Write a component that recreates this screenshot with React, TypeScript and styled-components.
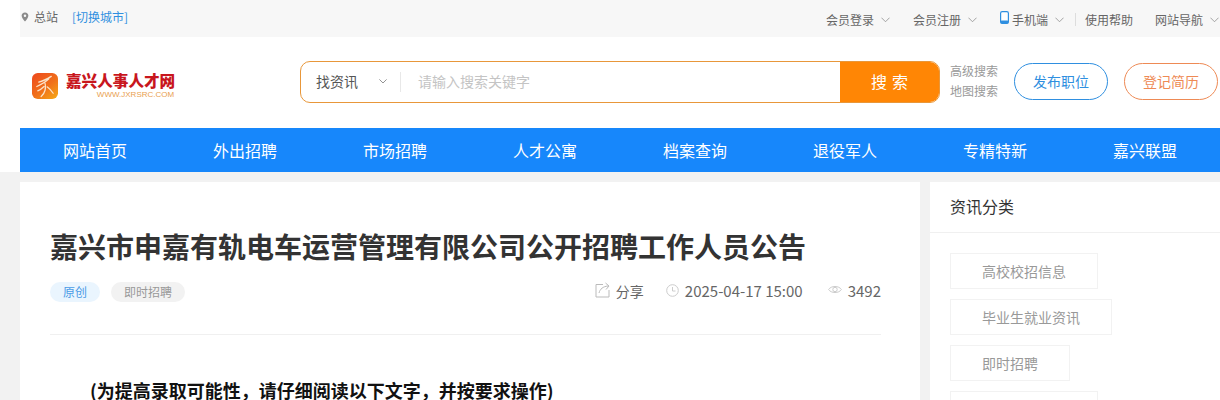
import { FunctionComponent } from "react";
import styled, { createGlobalStyle } from "styled-components";

const GlobalStyle = createGlobalStyle`
  html, body {
    margin: 0;
    padding: 0;
    height: 400px;
    overflow: hidden;
    background: #fff;
    font-family: "Noto Sans CJK SC", "Noto Sans", sans-serif;
  }
`;

const Page = styled.div`
  width: 1220px;
  height: 400px;
  overflow: hidden;
`;

const Header = styled.header`
  margin-left: 20px;
  width: 1200px;
`;

const TopBar = styled.div`
  height: 37px;
  background: #f7f7f7;
  display: flex;
  align-items: center;
  justify-content: space-between;
  font-size: 12px;
  color: #666;
`;

const City = styled.div`
  display: flex;
  align-items: center;
  padding-bottom: 4px;
`;

const CityLink = styled.span`
  color: #2f8fe0;
  margin-left: 14px;
`;

const TopMenu = styled.div`
  display: flex;
  align-items: center;
  padding-top: 1px;
`;

const TopItem = styled.span<{ $gap: number }>`
  display: flex;
  align-items: center;
  margin-right: ${(p) => p.$gap}px;
  white-space: nowrap;

  svg {
    margin-left: 7px;
  }
`;

const TopDivider = styled.span`
  width: 1px;
  height: 13px;
  background: #ddd;
  margin-right: 9px;
`;

const LogoRow = styled.div`
  height: 91px;
  display: flex;
  align-items: center;
`;

const Logo = styled.div`
  width: 280px;
  display: flex;
  align-items: center;
  padding: 6px 0 0 12px;
  box-sizing: border-box;
`;

const LogoText = styled.div`
  margin-left: 8px;
  display: flex;
  flex-direction: column;
  align-items: flex-end;
`;

const LogoName = styled.span`
  color: #c8161d;
  font-size: 15.6px;
  font-weight: 900;
  line-height: 19px;
  white-space: nowrap;
`;

const LogoUrl = styled.span`
  color: #e9a04e;
  font-size: 8px;
  line-height: 10px;
  margin-right: 1px;
  font-family: "Liberation Sans", sans-serif;
`;

const SearchBox = styled.div`
  width: 640px;
  height: 42px;
  margin-top: -1px;
  box-sizing: border-box;
  border: 1px solid #e8973a;
  border-radius: 10px;
  display: flex;
  align-items: stretch;
  overflow: hidden;
`;

const SearchType = styled.div`
  width: 100px;
  display: flex;
  align-items: center;
  justify-content: space-between;
  padding: 0 14px 2px 15px;
  box-sizing: border-box;
  font-size: 14px;
  color: #555;
  position: relative;

  &::after {
    content: "";
    position: absolute;
    right: 0;
    top: 10px;
    height: 20px;
    width: 1px;
    background: #e8e8e8;
  }
`;

const SearchInput = styled.div`
  flex: 1;
  display: flex;
  align-items: center;
  padding: 0 0 2px 17px;
  font-size: 14px;
  color: #c4c4c4;
`;

const SearchButton = styled.div`
  width: 100px;
  margin: -1px -1px -1px 0;
  padding: 0 0 3px 4px;
  box-sizing: border-box;
  background: #ff8605;
  color: #fff;
  font-size: 16px;
  display: flex;
  align-items: center;
  justify-content: center;
  letter-spacing: 5px;
`;

const SearchLinks = styled.div`
  width: 74px;
  padding: 0 0 3px 10px;
  box-sizing: border-box;
  font-size: 12px;
  line-height: 20px;
  color: #999;
`;

const PillButton = styled.div<{ $color: string; $gap: number }>`
  width: 94px;
  height: 37px;
  margin: 0 ${(p) => p.$gap}px 2px 0;
  padding-bottom: 2px;
  box-sizing: border-box;
  border: 1px solid ${(p) => p.$color};
  border-radius: 19px;
  color: ${(p) => p.$color};
  font-size: 14px;
  display: flex;
  align-items: center;
  justify-content: center;
`;

const Nav = styled.nav`
  height: 44px;
  background: #1787fb;
  display: flex;
`;

const NavItem = styled.a`
  width: 150px;
  display: flex;
  align-items: center;
  justify-content: center;
  color: #fff;
  font-size: 16px;
`;

const Main = styled.main`
  height: 228px;
  background: #f2f2f2;
  padding: 10px 0 0 20px;
  box-sizing: border-box;
  display: flex;
  gap: 10px;
`;

const Article = styled.article`
  width: 900px;
  height: 400px;
  background: #fff;
  padding: 45px 39px 0 30px;
  box-sizing: border-box;
`;

const Title = styled.h1`
  margin: 0;
  font-size: 28px;
  font-weight: 700;
  line-height: 38px;
  color: #333;
  white-space: nowrap;
`;

const MetaRow = styled.div`
  margin-top: 17px;
  height: 20px;
  display: flex;
  align-items: center;
  justify-content: space-between;
`;

const Tags = styled.div`
  display: flex;
  gap: 11px;
`;

const Tag = styled.span<{ $blue?: boolean }>`
  height: 20px;
  padding: 0 13px;
  border-radius: 10px;
  font-size: 12px;
  line-height: 20px;
  background: ${(p) => (p.$blue ? "#eaf5fe" : "#f2f2f2")};
  color: ${(p) => (p.$blue ? "#4a9be6" : "#999")};
`;

const Meta = styled.div`
  display: flex;
  align-items: center;
  padding-bottom: 3px;
  font-size: 14px;
  color: #666;
`;

const MetaItem = styled.span<{ $gap: number; $numeric?: boolean }>`
  display: flex;
  align-items: center;
  margin-left: ${(p) => p.$gap}px;
  white-space: nowrap;
  font-size: ${(p) => (p.$numeric ? 15 : 14)}px;

  svg {
    margin-right: 6px;
  }
`;

const Divider = styled.div`
  margin-top: 32px;
  height: 1px;
  background: #f0f0f0;
`;

const Notice = styled.p`
  margin: 42px 0 0 40px;
  font-size: 18px;
  font-weight: 700;
  line-height: 26px;
  color: #111;
  white-space: nowrap;
`;

const Side = styled.aside`
  width: 290px;
  height: 400px;
  background: #fff;
`;

const SideHead = styled.div`
  height: 50px;
  padding: 0 20px 3px;
  box-sizing: border-box;
  margin-bottom: 1px;
  box-shadow: 0 1px 0 #f0f0f0;
  font-size: 16px;
  color: #333;
  display: flex;
  align-items: center;
`;

const CategoryList = styled.div`
  padding: 20px 20px 0;
  display: flex;
  flex-direction: column;
  align-items: flex-start;
  gap: 10px;
`;

const Category = styled.span<{ $minWidth?: number }>`
  height: 36px;
  padding: 0 31px 1px;
  box-sizing: border-box;
  min-width: ${(p) => p.$minWidth ?? 120}px;
  border: 1px solid #f2f2f2;
  font-size: 14px;
  color: #999;
  display: flex;
  align-items: center;
  white-space: nowrap;
`;

const Chevron: FunctionComponent<{ size?: number; color?: string }> = ({ size = 9, color = "#999" }) => (
  <svg width={size} height={size} viewBox="0 0 10 10" fill="none">
    <path d="M0.5 3 L5 7.5 L9.5 3" stroke={color} strokeWidth="1" />
  </svg>
);

const NAV_ITEMS = ["网站首页", "外出招聘", "市场招聘", "人才公寓", "档案查询", "退役军人", "专精特新", "嘉兴联盟"];
const CATEGORIES = ["高校校招信息", "毕业生就业资讯", "即时招聘"];

export default function App() {
  return (
    <Page>
      <GlobalStyle />
      <Header>
        <TopBar>
          <City>
            <svg width="8" height="10" viewBox="0 0 9 11" style={{ marginRight: 5, marginLeft: 1 }}>
              <path
                fillRule="evenodd"
                d="M4.5 0.3C2.2 0.3 0.7 2 0.7 4C0.7 6.4 3.4 9 4.5 10.6C5.6 9 8.3 6.4 8.3 4C8.3 2 6.8 0.3 4.5 0.3ZM4.5 2.7A1.4 1.4 0 1 1 4.5 5.5A1.4 1.4 0 1 1 4.5 2.7Z"
                fill="#8a8a8a"
              />
            </svg>
            总站
            <CityLink>[切换城市]</CityLink>
          </City>
          <TopMenu>
            <TopItem $gap={23}>会员登录<Chevron /></TopItem>
            <TopItem $gap={23}>会员注册<Chevron /></TopItem>
            <TopItem $gap={11}>
              <svg width="9" height="13" viewBox="0 0 9 13" style={{ margin: "0 3px 3px 0" }}>
                <rect x="0.6" y="0.6" width="7.8" height="11.8" rx="1.6" fill="#fff" stroke="#2f8fe0" strokeWidth="1.2" />
                <rect x="0.6" y="9.6" width="7.8" height="2.8" rx="1.2" fill="#2f8fe0" />
              </svg>
              手机端<Chevron />
            </TopItem>
            <TopDivider />
            <TopItem $gap={22}>使用帮助</TopItem>
            <TopItem $gap={1}>网站导航<Chevron /></TopItem>
          </TopMenu>
        </TopBar>
        <LogoRow>
          <Logo>
            <svg width="26" height="26" viewBox="0 0 27 27">
              <defs>
                <linearGradient id="logoFill" x1="0.1" y1="0" x2="0.9" y2="1">
                  <stop offset="0" stopColor="#ee4a1c" />
                  <stop offset="0.55" stopColor="#f0701a" />
                  <stop offset="1" stopColor="#f5a516" />
                </linearGradient>
              </defs>
              <rect width="27" height="27" rx="6" fill="url(#logoFill)" />
              <path
                d="M7 9.5C11 8.5 16 6 20 3.5M17.5 6C14 9.5 9.5 12 5 14M13.5 10.5C15 15 13.5 21 9.5 24.5M12.5 14C10.5 16 8.5 17.5 6 18.5M16 14.5C18 16 20 18 22 21"
                stroke="#fbe3c8"
                strokeWidth="1.3"
                fill="none"
                strokeLinecap="round"
              />
            </svg>
            <LogoText>
              <LogoName>嘉兴人事人才网</LogoName>
              <LogoUrl>WWW.JXRSRC.COM</LogoUrl>
            </LogoText>
          </Logo>
          <SearchBox>
            <SearchType>
              找资讯
              <Chevron size={8} color="#777" />
            </SearchType>
            <SearchInput>请输入搜索关键字</SearchInput>
            <SearchButton>搜索</SearchButton>
          </SearchBox>
          <SearchLinks>
            <div>高级搜索</div>
            <div>地图搜索</div>
          </SearchLinks>
          <PillButton $color="#2f8fe0" $gap={16}>发布职位</PillButton>
          <PillButton $color="#ee8a55" $gap={0}>登记简历</PillButton>
        </LogoRow>
        <Nav>
          {NAV_ITEMS.map((item) => (
            <NavItem key={item}>{item}</NavItem>
          ))}
        </Nav>
      </Header>
      <Main>
        <Article>
          <Title>嘉兴市申嘉有轨电车运营管理有限公司公开招聘工作人员公告</Title>
          <MetaRow>
            <Tags>
              <Tag $blue>原创</Tag>
              <Tag>即时招聘</Tag>
            </Tags>
            <Meta>
              <MetaItem $gap={0}>
                <svg width="15" height="16" viewBox="0 0 15 16" fill="none" stroke="#bbb" strokeWidth="1" style={{ marginRight: 6, marginBottom: 2 }}>
                  <path d="M8 2.5H1V15H14V8" />
                  <path d="M4 11C5 7 8 4.5 13 4M10.5 1L14 4L11 7.5" />
                </svg>
                分享
              </MetaItem>
              <MetaItem $gap={22} $numeric>
                <svg width="13" height="13" viewBox="0 0 13 13" fill="none" stroke="#ccc" strokeWidth="1" style={{ marginBottom: 1 }}>
                  <circle cx="6.5" cy="6.5" r="5.8" />
                  <path d="M6.5 3V7H9.5" />
                </svg>
                2025-04-17 15:00
              </MetaItem>
              <MetaItem $gap={25} $numeric>
                <svg width="14" height="11" viewBox="0 0 14 11" fill="none" stroke="#ccc" strokeWidth="1" style={{ marginBottom: 3 }}>
                  <path d="M0.6 5.5C3 1.5 11 1.5 13.4 5.5C11 9.5 3 9.5 0.6 5.5Z" />
                  <circle cx="7" cy="5.5" r="2.2" />
                </svg>
                3492
              </MetaItem>
            </Meta>
          </MetaRow>
          <Divider />
          <Notice>(为提高录取可能性，请仔细阅读以下文字，并按要求操作)</Notice>
        </Article>
        <Side>
          <SideHead>资讯分类</SideHead>
          <CategoryList>
            {CATEGORIES.map((item) => (
              <Category key={item}>{item}</Category>
            ))}
            <Category $minWidth={148} />
          </CategoryList>
        </Side>
      </Main>
    </Page>
  );
}
